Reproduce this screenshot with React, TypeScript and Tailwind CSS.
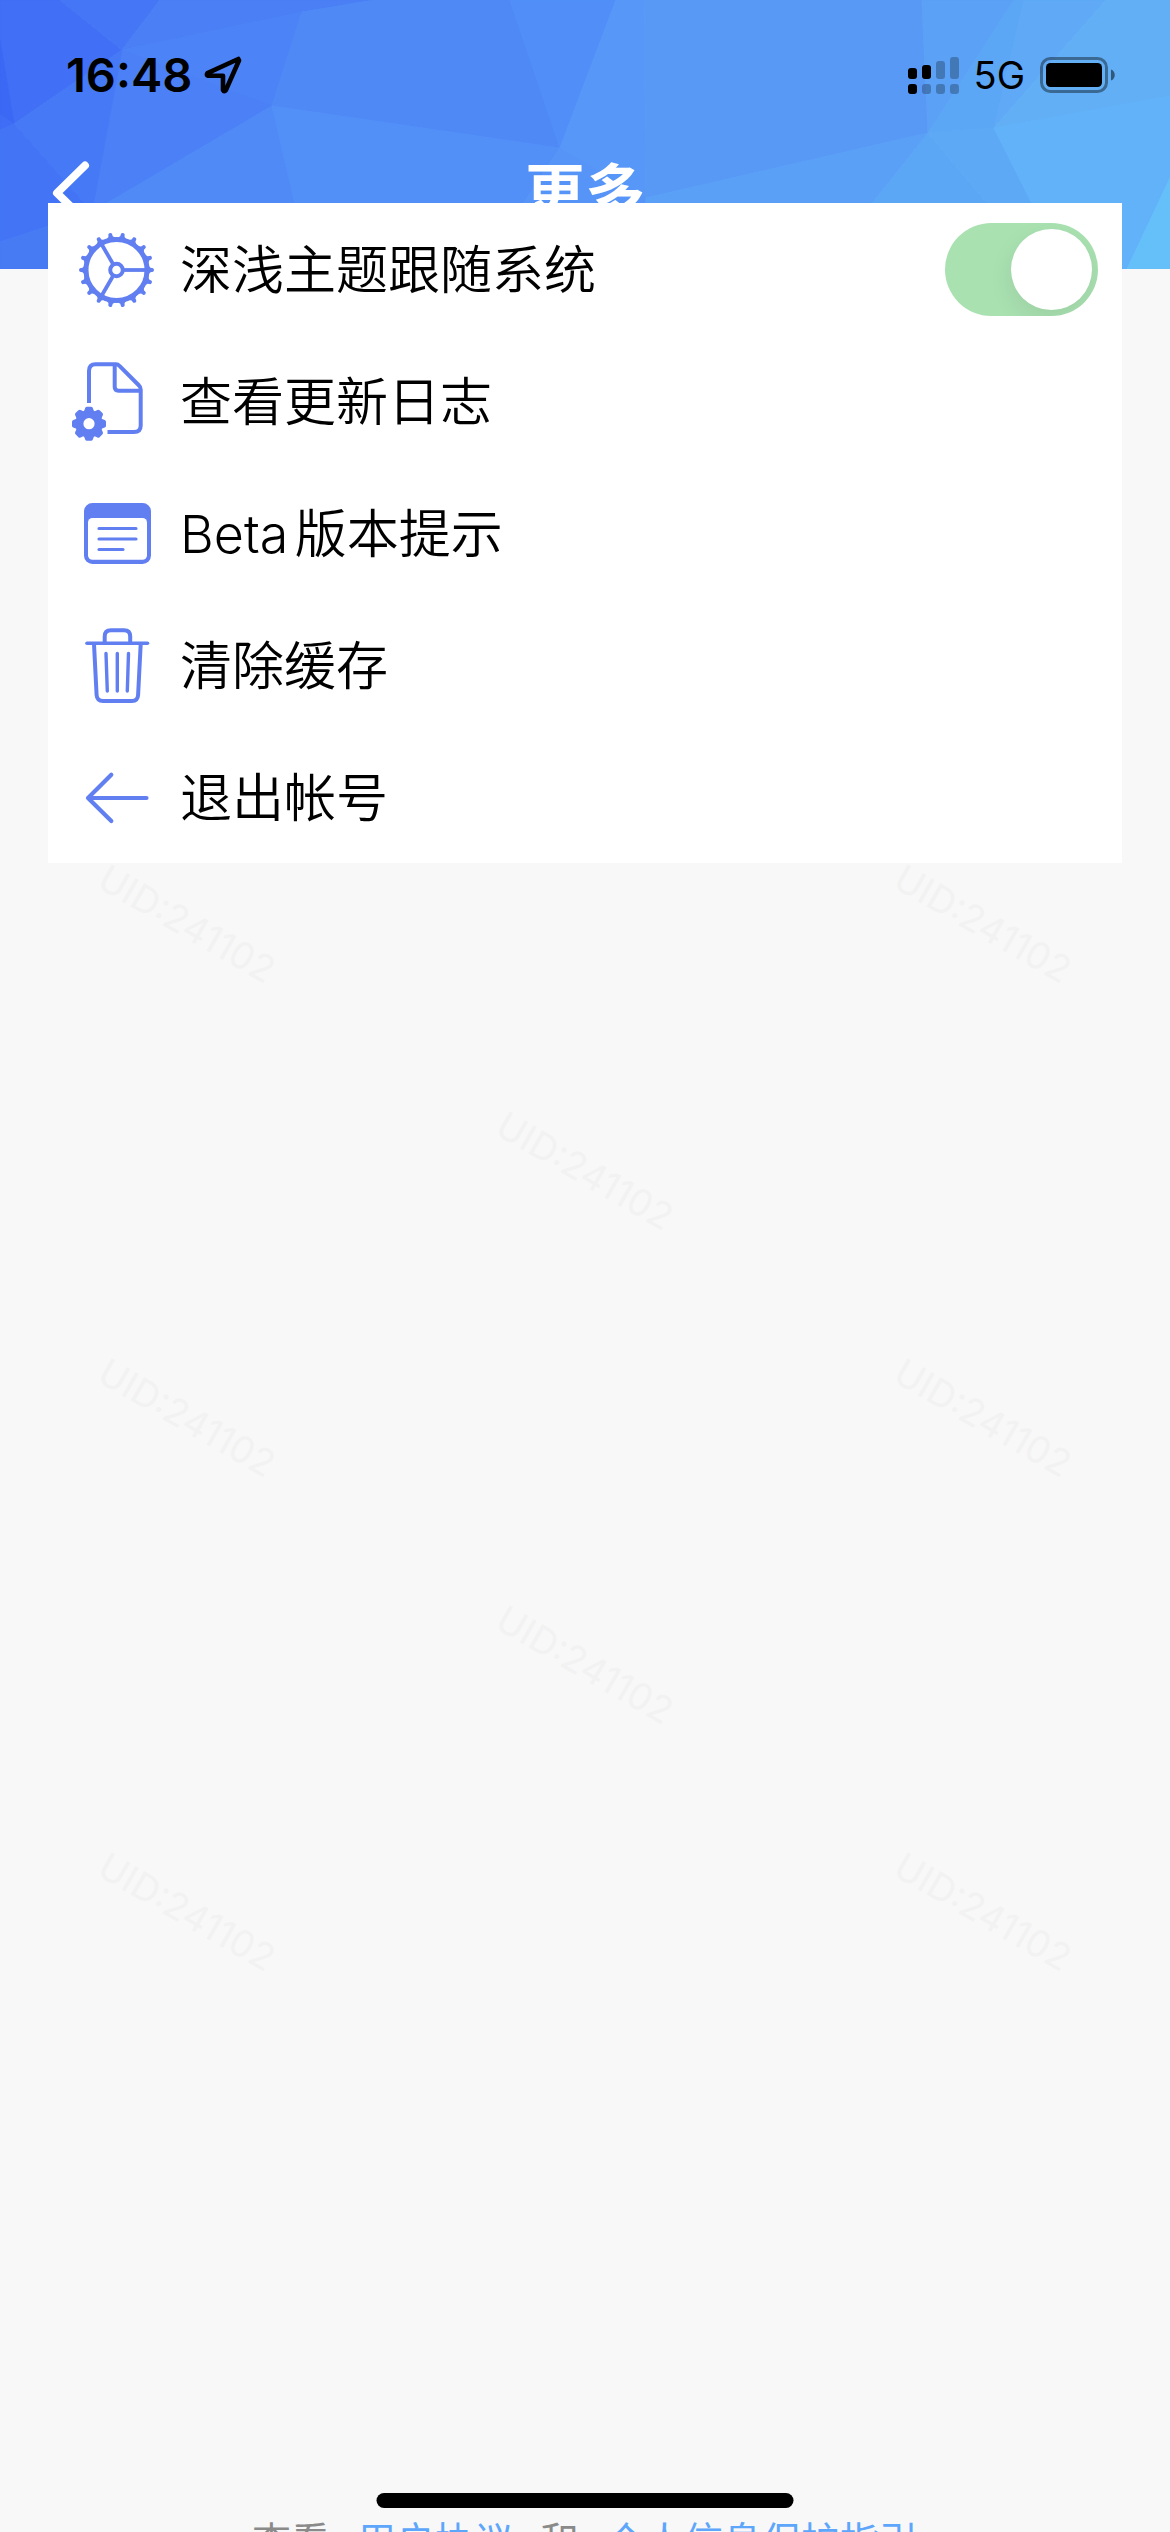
import type { ReactNode } from "react";

interface MenuRowProps {
  icon: ReactNode;
  label: string;
}

const facets = [
  { points: "0,0 60,0 122,50 14,124 0,40", fill: "#416ff5" },
  { points: "0,40 14,124 0,115", fill: "#3b68f5" },
  { points: "0,115 14,124 0,130", fill: "#3f6df5" },
  { points: "60,0 160,0 122,50", fill: "#4576f5" },
  { points: "160,0 375,0 302,12 122,50", fill: "#4a7ff5" },
  { points: "122,50 302,12 272,106", fill: "#4c83f6" },
  { points: "122,50 272,106 92,212", fill: "#4b80f6" },
  { points: "14,124 122,50 92,212", fill: "#4679f6" },
  { points: "0,130 14,124 92,212 0,242", fill: "#4374f6" },
  { points: "0,242 92,212 92,269 0,269", fill: "#477bf4" },
  { points: "375,0 510,0 560,148 272,106 302,12", fill: "#4f89f6" },
  { points: "272,106 310,269 92,269 92,212", fill: "#4f8af6" },
  { points: "272,106 560,148 480,269 310,269", fill: "#528ff7" },
  { points: "510,0 616,0 560,148", fill: "#518ef8" },
  { points: "616,0 644,0 646,198 560,148", fill: "#5797f8" },
  { points: "560,148 646,198 646,269 480,269", fill: "#5695f7" },
  { points: "644,0 922,0 928,133 646,198", fill: "#5999f6" },
  { points: "646,198 928,133 820,269 646,269", fill: "#5aa0f7" },
  { points: "922,0 1014,0 928,133", fill: "#5ba1f6" },
  { points: "1014,0 1024,0 994,128 928,133", fill: "#5ca6f6" },
  { points: "1024,0 1106,0 994,128", fill: "#5fa9f6" },
  { points: "928,133 1042,269 820,269", fill: "#5ca6f6" },
  { points: "928,133 994,128 1065,269 1042,269", fill: "#5da9f6" },
  { points: "1106,0 1170,0 1170,96 994,128", fill: "#62aff6" },
  { points: "994,128 1170,96 1170,178 1127,269 1065,269", fill: "#61b2f9" },
  { points: "1170,178 1170,269 1127,269", fill: "#65bff9" },
];

const watermarks = [true, false, true, false, true, false, true, false, true, false, true, false, true, false, true];

function HeaderBackdrop() {
  return (
    <svg
      viewBox="0 0 1170 269"
      preserveAspectRatio="none"
      className="absolute inset-0 h-full w-full"
      aria-hidden="true"
    >
      {facets.map((f) => (
        <polygon key={f.points} points={f.points} fill={f.fill} stroke={f.fill} strokeWidth="1" />
      ))}
    </svg>
  );
}

function SignalIcon() {
  return (
    <svg width="51" height="37" viewBox="0 0 51 37" aria-hidden="true">
      <rect x="0" y="11" width="9" height="11" rx="3" />
      <rect x="14" y="8" width="9" height="14" rx="3" />
      <g opacity="0.25">
        <rect x="28" y="4" width="9" height="18" rx="3" />
        <rect x="42" y="0" width="9" height="22" rx="3" />
        <rect x="14" y="27" width="9" height="10" rx="3" />
        <rect x="28" y="27" width="9" height="10" rx="3" />
        <rect x="42" y="27" width="9" height="10" rx="3" />
      </g>
      <rect x="0" y="27" width="9" height="10" rx="3" />
    </svg>
  );
}

function BatteryIcon() {
  return (
    <svg width="75" height="36" viewBox="0 0 75 36" aria-hidden="true">
      <rect x="1.5" y="1.5" width="65" height="33" rx="9" fill="none" stroke="#000" strokeWidth="3" opacity="0.4" />
      <rect x="6" y="6" width="56" height="24" rx="4.5" />
      <path d="M71 12.5c5 1.500 5 9.500 0 11z" opacity="0.5" />
    </svg>
  );
}

function CogIcon() {
  const teeth = Array.from({ length: 18 }, (_, i) => i * 20);
  return (
    <svg width="88" height="88" viewBox="0 0 88 88" fill="none" stroke="#617ff0" aria-hidden="true">
      <circle cx="44.500" cy="45" r="30.500" strokeWidth="5" />
      <circle cx="44.500" cy="45" r="6.300" strokeWidth="4" />
      {[0, 120, 240].map((a) => (
        <path key={a} d="M52 45H74" strokeWidth="3.800" transform={`rotate(${a} 44.500 45)`} />
      ))}
      {teeth.map((a) => (
        <path
          key={a}
          d="M76 40L78.500 42.800L81.200 43.200Q83 45 81.200 46.800L78.500 47.200L76 50Z"
          fill="#617ff0"
          stroke="none"
          transform={`rotate(${a} 44.500 45)`}
        />
      ))}
    </svg>
  );
}

function LogIcon() {
  return (
    <svg width="88" height="88" viewBox="0 0 88 88" fill="none" stroke="#617ff0" strokeWidth="4" className="overflow-visible" aria-hidden="true">
      <path d="M17 46V14Q17 7.300 23.500 7.300H44Q46 7.300 47.500 9L67 28.500Q68.700 30 68.700 32.500V68.500Q68.700 75 62 75H35.500" />
      <path d="M42.700 8V30Q42.700 33.700 46.500 33.700H68" />
      <g fill="#617ff0" stroke="none">
        <path
          fillRule="evenodd"
          d="M17 53a13.700 13.700 0 1 1 0 27.400a13.700 13.700 0 1 1 0 -27.400zM17 61.100a5.600 5.600 0 1 0 0 11.200a5.600 5.600 0 1 0 0 -11.200z"
        />
        {[0, 45, 90, 135, 180, 225, 270, 315].map((a) => (
          <path key={a} d="M11.500 55.500L13.200 51Q13.600 49.700 15 49.700H19Q20.400 49.700 20.800 51L22.500 55.500Z" transform={`rotate(${a} 17 66.700)`} />
        ))}
      </g>
    </svg>
  );
}

function NoteIcon() {
  return (
    <svg width="88" height="88" viewBox="0 0 88 88" aria-hidden="true">
      <rect x="12" y="14" width="67" height="61" rx="8.500" fill="#617ff0" />
      <rect x="16" y="29" width="59" height="41.700" rx="4.500" fill="#fff" />
      <path d="M27 39.500H64M27 50H64M27 60.500H51" stroke="#617ff0" strokeWidth="3.200" strokeLinecap="round" />
    </svg>
  );
}

function TrashIcon() {
  return (
    <svg width="88" height="88" viewBox="0 0 88 88" fill="none" stroke="#617ff0" strokeWidth="4" strokeLinecap="round" aria-hidden="true">
      <path d="M15 22.300H75.500" strokeWidth="3.600" />
      <path d="M32.700 21.500V15.500Q32.700 9.300 39 9.300H52Q58.200 9.300 58.200 15.500V21.500" strokeLinecap="butt" />
      <path d="M22 23L24.600 74Q25 80 31 80H60Q65.800 80 66.100 74L68.700 23" strokeLinecap="butt" />
      <path d="M34 32.500L35.300 70M45.300 32.500V70M56.500 32.500L55.300 70" strokeWidth="3.400" />
    </svg>
  );
}

function ExitIcon() {
  return (
    <svg width="88" height="88" viewBox="0 0 88 88" fill="none" stroke="#617ff0" strokeWidth="4.200" strokeLinecap="round" strokeLinejoin="round" aria-hidden="true">
      <path d="M39.300 21.700L16 45L39.300 68M16 45H74.500" />
    </svg>
  );
}

function MenuRow({ icon, label }: MenuRowProps) {
  return (
    <li>
      <button type="button" className="flex h-[132px] w-full items-center gap-5 px-6 text-left">
        {icon}
        <span className="pt-1">{label}</span>
      </button>
    </li>
  );
}

export default function App() {
  return (
    <div className="relative flex h-screen flex-col overflow-hidden bg-[#f8f8f8] font-[Inter,'Noto_Sans_CJK_SC',sans-serif] text-black">
      <header className="relative shrink-0 pb-[35px]">
        <HeaderBackdrop />

        <div className="relative flex h-[150px] items-center justify-between pr-[55px] pl-[66px]">
          <div className="flex items-center gap-3">
            <span className="text-[47px] font-semibold">16:48</span>
            <svg width="38" height="38" viewBox="0 0 38 38" fill="none" stroke="#000" strokeWidth="4.600" strokeLinejoin="round" aria-hidden="true">
              <path d="M34.300 3L3.500 17.200Q2 19.300 4 19.800H19V34Q20.200 36.500 21.800 34.200L35 4.500Z" />
            </svg>
          </div>
          <div className="flex items-center gap-[15px]">
            <SignalIcon />
            <span className="text-[38px]">5G</span>
            <BatteryIcon />
          </div>
        </div>

        <div className="relative flex h-[84px] items-center justify-center">
          <button type="button" aria-label="返回" className="absolute left-12">
            <svg width="48" height="64" viewBox="0 0 48 64" fill="none" stroke="#fff" strokeWidth="8" strokeLinecap="round" strokeLinejoin="round" aria-hidden="true">
              <path d="M37 5.500L9 33L37 60.500" />
            </svg>
          </button>
          <h1 className="text-[60px] leading-[84px] font-bold text-white">更多</h1>
        </div>
      </header>

      {/* watermark */}
      <div className="pointer-events-none absolute inset-x-0 top-[800px]">
        <div className="-mx-3 grid auto-rows-[247px] grid-cols-3 place-items-center text-[37px] text-[#f2f2f2]">
          {watermarks.map((shown, i) => (
            <span key={i} className="rotate-[30deg]">
              {shown ? "UID:241102" : ""}
            </span>
          ))}
        </div>
      </div>

      <main className="relative -mt-[66px] flex-1 px-12">
        <ul className="bg-white text-[52px] font-[350] [text-autospace:normal]">
          <li className="flex h-[132px] items-center justify-between px-6">
            <label htmlFor="follow-system" className="flex items-center gap-5">
              <CogIcon />
              <span className="pt-1">深浅主题跟随系统</span>
            </label>
            <input
              id="follow-system"
              type="checkbox"
              role="switch"
              defaultChecked
              className="h-[93px] w-[153px] appearance-none overflow-hidden rounded-full bg-[#a9e1b1] p-[6px] before:block before:size-[81px] before:rounded-full before:bg-white before:shadow-[0_9px_24px_rgba(0,0,0,0.08)] checked:before:ml-auto"
            />
          </li>
          <MenuRow icon={<LogIcon />} label="查看更新日志" />
          <MenuRow icon={<NoteIcon />} label="Beta版本提示" />
          <MenuRow icon={<TrashIcon />} label="清除缓存" />
          <MenuRow icon={<ExitIcon />} label="退出帐号" />
        </ul>
      </main>

      <footer className="-mb-[29px] flex shrink-0 justify-center gap-[27px] text-[39px] leading-[40px] text-[#8a8a8a]">
        <span>查看</span>
        <a href="#terms" className="text-[#5ea6fb]">用户协议</a>
        <span>和</span>
        <a href="#privacy" className="text-[#5ea6fb]">个人信息保护指引</a>
      </footer>

      <div className="absolute bottom-6 left-1/2 h-[15px] w-[417px] -translate-x-1/2 rounded-full bg-black" />
    </div>
  );
}
